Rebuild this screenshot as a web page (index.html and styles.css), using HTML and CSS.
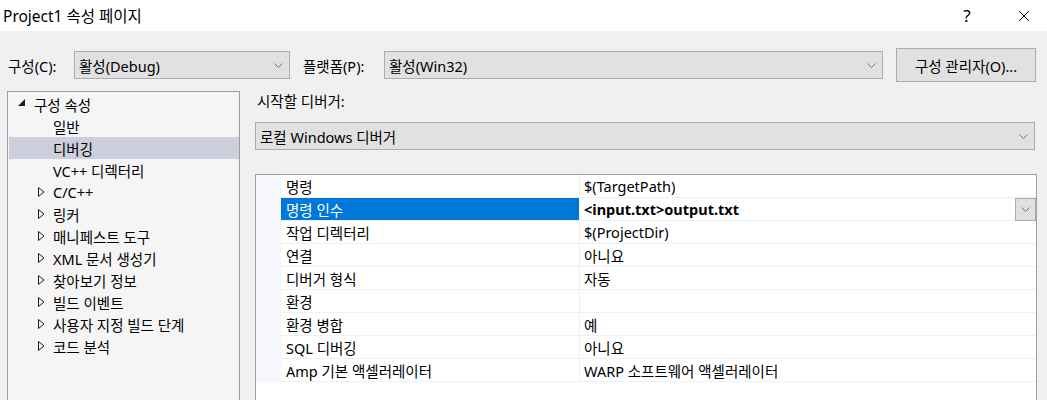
FILE: index.html
```html
<!DOCTYPE html>
<html lang="ko">
<head>
<meta charset="utf-8">
<title>Project1 속성 페이지</title>
<link rel="stylesheet" href="styles.css">
</head>
<body>
<div class="titlebar">
  <div class="title">Project1 속성 페이지</div>
  <div class="title-help">?</div>
  <div class="title-close">
    <svg width="12" height="12" viewBox="0 0 12 12"><path d="M1 1 L11 11 M11 1 L1 11" stroke="#000" stroke-width="1" fill="none"/></svg>
  </div>
</div>

<div class="toolbar">
  <div class="lbl lbl-config">구성(C):</div>
  <div class="combo combo-config">
    <span>활성(Debug)</span>
    <svg class="chev" width="9" height="5" viewBox="0 0 9 5"><path d="M0.5 0.5 L4.5 4.5 L8.5 0.5" stroke="#707070" fill="none"/></svg>
  </div>
  <div class="lbl lbl-platform">플랫폼(P):</div>
  <div class="combo combo-platform">
    <span>활성(Win32)</span>
    <svg class="chev" width="9" height="5" viewBox="0 0 9 5"><path d="M0.5 0.5 L4.5 4.5 L8.5 0.5" stroke="#707070" fill="none"/></svg>
  </div>
  <div class="btn">구성 관리자(O)...</div>
</div>

<div class="main">
  <div class="tree">
    <div class="node root"><svg class="tri-open" width="8" height="8" viewBox="0 0 8 8"><path d="M7 0 L7 7 L0 7 Z" fill="#1e1e1e"/></svg><span>구성 속성</span></div>
    <div class="node leaf">일반</div>
    <div class="node leaf selected">디버깅</div>
    <div class="node leaf">VC++ 디렉터리</div>
    <div class="node branch"><svg class="tri" width="7" height="10" viewBox="0 0 7 10"><path d="M0.5 0.5 L6 5 L0.5 9.5 Z" fill="none" stroke="#1e1e1e"/></svg><span>C/C++</span></div>
    <div class="node branch"><svg class="tri" width="7" height="10" viewBox="0 0 7 10"><path d="M0.5 0.5 L6 5 L0.5 9.5 Z" fill="none" stroke="#1e1e1e"/></svg><span>링커</span></div>
    <div class="node branch"><svg class="tri" width="7" height="10" viewBox="0 0 7 10"><path d="M0.5 0.5 L6 5 L0.5 9.5 Z" fill="none" stroke="#1e1e1e"/></svg><span>매니페스트 도구</span></div>
    <div class="node branch"><svg class="tri" width="7" height="10" viewBox="0 0 7 10"><path d="M0.5 0.5 L6 5 L0.5 9.5 Z" fill="none" stroke="#1e1e1e"/></svg><span>XML 문서 생성기</span></div>
    <div class="node branch"><svg class="tri" width="7" height="10" viewBox="0 0 7 10"><path d="M0.5 0.5 L6 5 L0.5 9.5 Z" fill="none" stroke="#1e1e1e"/></svg><span>찾아보기 정보</span></div>
    <div class="node branch"><svg class="tri" width="7" height="10" viewBox="0 0 7 10"><path d="M0.5 0.5 L6 5 L0.5 9.5 Z" fill="none" stroke="#1e1e1e"/></svg><span>빌드 이벤트</span></div>
    <div class="node branch"><svg class="tri" width="7" height="10" viewBox="0 0 7 10"><path d="M0.5 0.5 L6 5 L0.5 9.5 Z" fill="none" stroke="#1e1e1e"/></svg><span>사용자 지정 빌드 단계</span></div>
    <div class="node branch"><svg class="tri" width="7" height="10" viewBox="0 0 7 10"><path d="M0.5 0.5 L6 5 L0.5 9.5 Z" fill="none" stroke="#1e1e1e"/></svg><span>코드 분석</span></div>
  </div>

  <div class="panel">
    <div class="panel-label">시작할 디버거:</div>
    <div class="combo combo-debugger">
      <span>로컬 Windows 디버거</span>
      <svg class="chev" width="9" height="5" viewBox="0 0 9 5"><path d="M0.5 0.5 L4.5 4.5 L8.5 0.5" stroke="#707070" fill="none"/></svg>
    </div>
    <div class="grid">
      <div class="row"><div class="gutter"></div><div class="name">명령</div><div class="value">$(TargetPath)</div></div>
      <div class="row active"><div class="gutter"></div><div class="name">명령 인수</div><div class="value"><span>&lt;input.txt&gt;output.txt</span><div class="dd"><svg width="9" height="5" viewBox="0 0 9 5"><path d="M0.5 0.5 L4.5 4.5 L8.5 0.5" stroke="#707070" fill="none"/></svg></div></div></div>
      <div class="row"><div class="gutter"></div><div class="name">작업 디렉터리</div><div class="value">$(ProjectDir)</div></div>
      <div class="row"><div class="gutter"></div><div class="name">연결</div><div class="value">아니요</div></div>
      <div class="row"><div class="gutter"></div><div class="name">디버거 형식</div><div class="value">자동</div></div>
      <div class="row"><div class="gutter"></div><div class="name">환경</div><div class="value"></div></div>
      <div class="row"><div class="gutter"></div><div class="name">환경 병합</div><div class="value">예</div></div>
      <div class="row"><div class="gutter"></div><div class="name">SQL 디버깅</div><div class="value">아니요</div></div>
      <div class="row"><div class="gutter"></div><div class="name">Amp 기본 액셀러레이터</div><div class="value">WARP 소프트웨어 액셀러레이터</div></div>
    </div>
  </div>
</div>
</body>
</html>
```

FILE: styles.css
```css
* { box-sizing: border-box; }
html, body {
  margin: 0;
  padding: 0;
}
body {
  width: 1047px;
  height: 400px;
  overflow: hidden;
  background: #f0f0f0;
  font-family: "Noto Sans", "Noto Sans CJK KR", sans-serif;
  font-size: 14.5px;
  color: #000;
}

.titlebar {
  height: 31px;
  background: #fff;
  display: flex;
  align-items: center;
  padding-left: 3px;
}
.title {
  flex: 1;
  font-size: 15.5px;
}
.title-help {
  width: 20px;
  margin-right: 41px;
  font-size: 17px;
  text-align: center;
}
.title-close {
  width: 12px;
  height: 12px;
  margin-right: 17px;
  display: flex;
}

.toolbar {
  display: flex;
  align-items: center;
  height: 34px;
  margin-top: 17px;
  padding: 0 11px 0 8px;
}
.lbl {
  white-space: nowrap;
}
.lbl-config { width: 66px; }
.lbl-platform { width: 81px; margin-left: 13px; }

.combo {
  height: 28px;
  background: #e1e1e1;
  border: 1px solid #adadad;
  display: flex;
  align-items: center;
  padding: 0 6px 0 4px;
}
.combo span { flex: 1; white-space: nowrap; }
.chev { flex: none; }
.combo-config { width: 216px; }
.combo-platform { flex: 1; }
.btn {
  width: 140px;
  height: 34px;
  margin-left: 13px;
  background: #e1e1e1;
  border: 1px solid #adadad;
  display: flex;
  align-items: center;
  justify-content: center;
  white-space: nowrap;
}

.main {
  display: flex;
  margin-top: 9px;
  height: 309px;
  padding: 0 10px 0 7px;
}
.tree {
  width: 233px;
  height: 309px;
  background: #f5f5f5;
  border: 1px solid #9c9c9c;
  border-bottom: none;
  padding: 1px 0 0 1px;
  flex: none;
}
.node {
  height: 22px;
  display: flex;
  align-items: center;
  white-space: nowrap;
}
.node.root { padding-left: 9px; }
.node.root .tri-open { margin-right: 8px; margin-top: -2px; }
.node.leaf { padding-left: 44px; }
.node.branch { padding-left: 29px; }
.node.branch .tri { margin-right: 8px; }
.node.selected { background: #cccedb; }

.panel {
  flex: 1;
  margin-left: 15px;
  display: flex;
  flex-direction: column;
}
.panel-label {
  height: 20px;
  line-height: 20px;
  padding-left: 2px;
}
.combo-debugger {
  margin-top: 11px;
  margin-right: 2px;
  flex: none;
}
.grid {
  margin-top: 24px;
  flex: 1;
  background: #fff;
  border: 1px solid #a0a0a0;
  border-bottom: none;
}
.row {
  display: flex;
  height: 23px;
}
.gutter {
  width: 25px;
  background: #f5f7fc;
  flex: none;
}
.name {
  width: 299px;
  flex: none;
  padding-left: 5px;
  border-right: 1px solid #eef0f4;
  border-bottom: 1px solid #eef0f4;
  display: flex;
  align-items: center;
  white-space: nowrap;
}
.value {
  flex: 1;
  padding-left: 4px;
  border-bottom: 1px solid #eef0f4;
  display: flex;
  align-items: center;
  white-space: nowrap;
}
.row.active .name {
  background: #0078d7;
  color: #fff;
}
.row.active .value span {
  flex: 1;
  font-weight: bold;
}
.dd {
  width: 21px;
  height: 23px;
  background: #e1e1e1;
  border: 1px solid #adadad;
  display: flex;
  align-items: center;
  justify-content: center;
  flex: none;
}
```
